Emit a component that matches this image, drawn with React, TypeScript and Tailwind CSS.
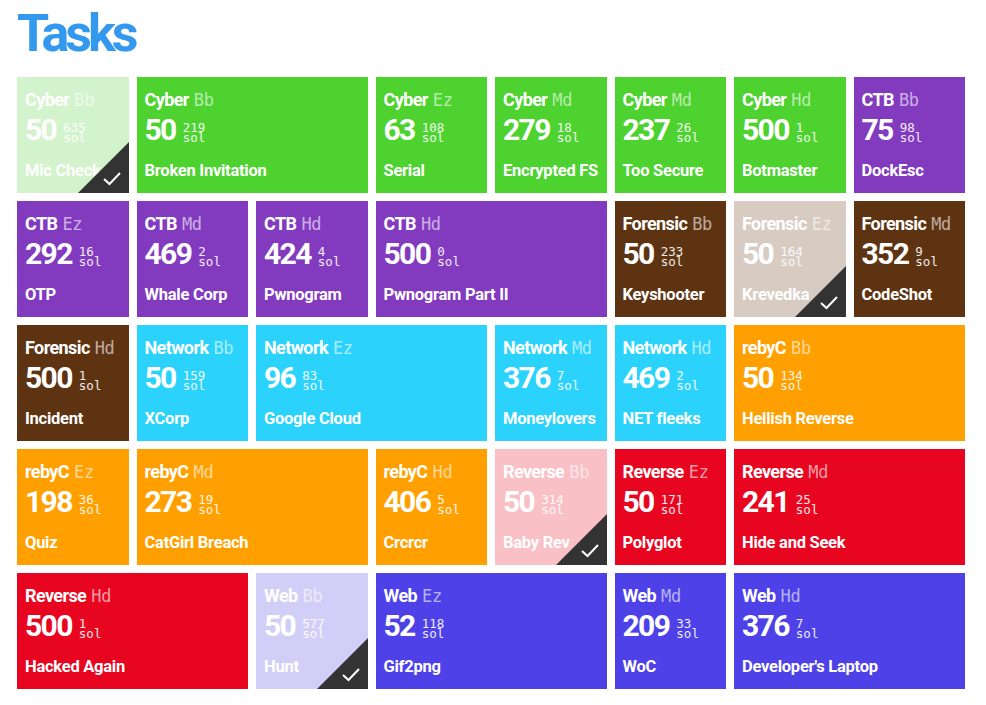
import React from "react";

type Tile = {
  cat: string;
  lvl: string;
  pts: number;
  sol: number;
  name: string;
  span?: 2;
  solved?: boolean;
};

const bg: Record<string, string> = {
  Cyber: "bg-[#4dd230]",
  CTB: "bg-[#823bbf]",
  Forensic: "bg-[#5e3312]",
  Network: "bg-[#2bd3fc]",
  rebyC: "bg-[#ff9f00]",
  Reverse: "bg-[#e8051f]",
  Web: "bg-[#4e41e8]",
};

const solvedBg: Record<string, string> = {
  Cyber: "bg-[#d3f3cc]",
  CTB: "bg-[#dac4ee]",
  Forensic: "bg-[#d7cbc2]",
  Network: "bg-[#c9f4fe]",
  rebyC: "bg-[#ffe3b3]",
  Reverse: "bg-[#f9c0c5]",
  Web: "bg-[#d1cff8]",
};

const tiles: Tile[] = [
  { cat: "Cyber", lvl: "Bb", pts: 50, sol: 635, name: "Mic Check", solved: true },
  { cat: "Cyber", lvl: "Bb", pts: 50, sol: 219, name: "Broken Invitation", span: 2 },
  { cat: "Cyber", lvl: "Ez", pts: 63, sol: 108, name: "Serial" },
  { cat: "Cyber", lvl: "Md", pts: 279, sol: 18, name: "Encrypted FS" },
  { cat: "Cyber", lvl: "Md", pts: 237, sol: 26, name: "Too Secure" },
  { cat: "Cyber", lvl: "Hd", pts: 500, sol: 1, name: "Botmaster" },
  { cat: "CTB", lvl: "Bb", pts: 75, sol: 98, name: "DockEsc" },
  { cat: "CTB", lvl: "Ez", pts: 292, sol: 16, name: "OTP" },
  { cat: "CTB", lvl: "Md", pts: 469, sol: 2, name: "Whale Corp" },
  { cat: "CTB", lvl: "Hd", pts: 424, sol: 4, name: "Pwnogram" },
  { cat: "CTB", lvl: "Hd", pts: 500, sol: 0, name: "Pwnogram Part II", span: 2 },
  { cat: "Forensic", lvl: "Bb", pts: 50, sol: 233, name: "Keyshooter" },
  { cat: "Forensic", lvl: "Ez", pts: 50, sol: 164, name: "Krevedka", solved: true },
  { cat: "Forensic", lvl: "Md", pts: 352, sol: 9, name: "CodeShot" },
  { cat: "Forensic", lvl: "Hd", pts: 500, sol: 1, name: "Incident" },
  { cat: "Network", lvl: "Bb", pts: 50, sol: 159, name: "XCorp" },
  { cat: "Network", lvl: "Ez", pts: 96, sol: 83, name: "Google Cloud", span: 2 },
  { cat: "Network", lvl: "Md", pts: 376, sol: 7, name: "Moneylovers" },
  { cat: "Network", lvl: "Hd", pts: 469, sol: 2, name: "NET fleeks" },
  { cat: "rebyC", lvl: "Bb", pts: 50, sol: 134, name: "Hellish Reverse", span: 2 },
  { cat: "rebyC", lvl: "Ez", pts: 198, sol: 36, name: "Quiz" },
  { cat: "rebyC", lvl: "Md", pts: 273, sol: 19, name: "CatGirl Breach", span: 2 },
  { cat: "rebyC", lvl: "Hd", pts: 406, sol: 5, name: "Crcrcr" },
  { cat: "Reverse", lvl: "Bb", pts: 50, sol: 314, name: "Baby Rev", solved: true },
  { cat: "Reverse", lvl: "Ez", pts: 50, sol: 171, name: "Polyglot" },
  { cat: "Reverse", lvl: "Md", pts: 241, sol: 25, name: "Hide and Seek", span: 2 },
  { cat: "Reverse", lvl: "Hd", pts: 500, sol: 1, name: "Hacked Again", span: 2 },
  { cat: "Web", lvl: "Bb", pts: 50, sol: 577, name: "Hunt", solved: true },
  { cat: "Web", lvl: "Ez", pts: 52, sol: 118, name: "Gif2png", span: 2 },
  { cat: "Web", lvl: "Md", pts: 209, sol: 33, name: "WoC" },
  { cat: "Web", lvl: "Hd", pts: 376, sol: 7, name: "Developer's Laptop", span: 2 },
];

const sans = "font-['Roboto',sans-serif]";
const mono = "font-['DejaVu_Sans_Mono',monospace]";

function TaskTile({ t }: { t: Tile }) {
  return (
    <div
      className={`relative overflow-hidden flex flex-col px-2 pt-[13px] pb-[12px] text-white ${
        t.span === 2 ? "col-span-2" : "col-span-1"
      } ${t.solved ? solvedBg[t.cat] : bg[t.cat]}`}
    >
      <div className="flex items-baseline gap-[5px] h-[20px] leading-[20px] whitespace-nowrap">
        <span className={`${sans} font-bold text-[18px] tracking-[-0.6px]`}>{t.cat}</span>
        <span className={`${mono} text-[17px] text-white/60 tracking-[-0.3px]`}>{t.lvl}</span>
      </div>
      <div className="flex items-end mt-[5px] h-[29px]">
        <span className={`${sans} font-bold text-[30px] leading-[29px] tracking-[-1.6px]`}>{t.pts}</span>
        <div className={`${mono} text-[12.5px] ml-[7px] mb-[1px] flex flex-col text-white/90`}>
          <span className="block h-[10px] leading-[10px]">{t.sol}</span>
          <span className="block h-[10px] leading-[10px]">sol</span>
        </div>
      </div>
      <div className={`${sans} mt-auto font-bold text-[16.5px] leading-[20px] tracking-[-0.25px] whitespace-nowrap`}>
        {t.name}
      </div>
      {t.solved && (
        <svg
          className="absolute right-0 bottom-0"
          width="51"
          height="51"
          viewBox="0 0 51 51"
        >
          <polygon points="51,0 51,51 0,51" fill="#333333" />
          <polyline
            points="26,37 31.5,42 42,31"
            fill="none"
            stroke="#ffffff"
            strokeWidth="2"
          />
        </svg>
      )}
    </div>
  );
}

export default function App() {
  return (
    <div className="min-h-screen bg-white pt-[8px] pl-[17px]">
      <h1
        className={`${sans} font-bold text-[52px] leading-[52px] h-[52px] tracking-[-4px] text-[#3399ee] mb-[17px]`}
      >
        Tasks
      </h1>
      <div className="grid grid-cols-8 gap-2 auto-rows-[116px] w-[948px]">
        {tiles.map((t, i) => (
          <TaskTile key={i} t={t} />
        ))}
      </div>
    </div>
  );
}
